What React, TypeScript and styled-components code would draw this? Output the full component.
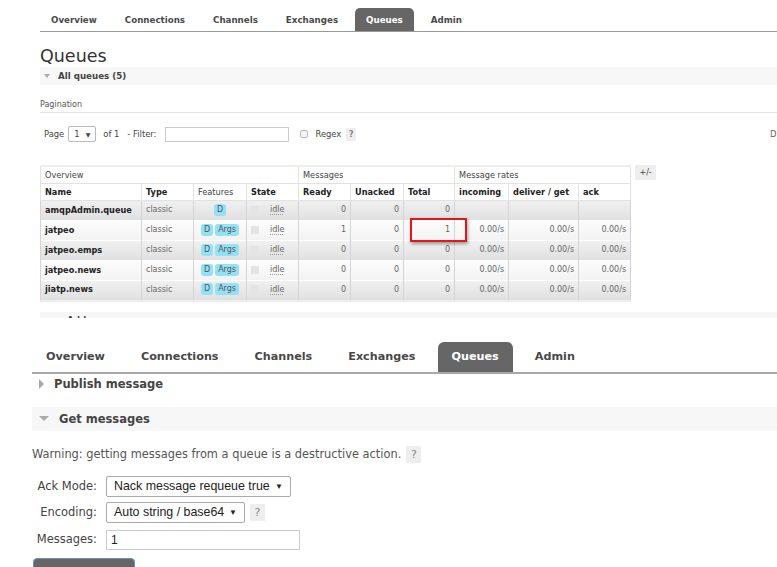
import React from 'react';
import styled, { createGlobalStyle } from 'styled-components';

const GlobalStyle = createGlobalStyle`
  html, body {
    margin: 0;
    padding: 0;
    background: #fff;
  }
`;

const Page = styled.div`
  position: relative;
  width: 777px;
  height: 567px;
  overflow: hidden;
  background: #fff;
  font-family: 'DejaVu Sans', Verdana, sans-serif;
  color: #444;
`;

/* ---------- shared ---------- */

const TabBar = styled.div<{ $large?: boolean }>`
  display: flex;
  align-items: flex-end;
  gap: ${(p) => (p.$large ? '8px' : '6px')};
  padding-top: ${(p) => (p.$large ? '24px' : '8px')};
  border-bottom: ${(p) => (p.$large ? '2px solid #a8a8a8' : '1px solid #999')};
`;

const Tab = styled.div<{ $large?: boolean; $active?: boolean }>`
  height: ${(p) => (p.$large ? '30px' : '23px')};
  line-height: ${(p) => (p.$large ? '30px' : '24px')};
  padding: 0 ${(p) => (p.$large ? '14px' : '11px')};
  font-size: ${(p) => (p.$large ? '11.2px' : '8.7px')};
  font-weight: bold;
  color: ${(p) => (p.$active ? '#fff' : '#484848')};
  background: ${(p) => (p.$active ? '#666' : 'transparent')};
  border-radius: ${(p) => (p.$large ? '6px 6px 0 0' : '5px 5px 0 0')};
  white-space: nowrap;
`;

const Help = styled.span<{ $large?: boolean }>`
  display: inline-block;
  width: ${(p) => (p.$large ? '15px' : '10px')};
  height: ${(p) => (p.$large ? '17px' : '13px')};
  line-height: ${(p) => (p.$large ? '17px' : '13px')};
  text-align: center;
  background: #eee;
  color: #888;
  font-size: ${(p) => (p.$large ? '11px' : '8.5px')};
  font-weight: ${(p) => (p.$large ? 'normal' : 'bold')};
`;

const Triangle = styled.span<{ $open?: boolean; $large?: boolean }>`
  display: inline-block;
  width: 0;
  height: 0;
  ${(p) =>
    p.$open
      ? `border-left: ${p.$large ? 5 : 3.5}px solid transparent;
         border-right: ${p.$large ? 5 : 3.5}px solid transparent;
         border-top: ${p.$large ? 5 : 4}px solid #aaa;`
      : `border-top: 5px solid transparent;
         border-bottom: 5px solid transparent;
         border-left: 5px solid #aaa;`}
`;

/* ---------- top screenshot ---------- */

const TopShot = styled.section`
  padding-left: 40px;
`;

const Title = styled.h1`
  margin: 0;
  padding-top: 13px;
  height: 22px;
  line-height: 22px;
  font-size: 17.5px;
  font-weight: normal;
  color: #333;
`;

const SectionBar = styled.div<{ $large?: boolean; $plain?: boolean }>`
  display: flex;
  align-items: center;
  gap: ${(p) => (p.$large ? '10px' : '8px')};
  height: ${(p) => (p.$large ? (p.$plain ? '21px' : '24px') : '18px')};
  padding-left: ${(p) => (p.$large ? '7px' : '4px')};
  background: ${(p) => (p.$plain ? 'transparent' : '#f7f7f7')};
  font-size: ${(p) => (p.$large ? '11.5px' : '8.7px')};
  font-weight: bold;
  color: #444;
`;

const SubHeading = styled.div`
  margin-top: 15px;
  padding-bottom: 3px;
  border-bottom: 1px solid #e6e6e6;
  font-size: 8px;
  color: #555;
`;

const FilterRow = styled.div`
  display: flex;
  align-items: center;
  height: 16px;
  margin-top: 13px;
  margin-right: -200px;
  padding-left: 4px;
  font-size: 8.4px;
  color: #444;
  white-space: nowrap;
`;

const SmallSelect = styled.div`
  display: flex;
  align-items: center;
  justify-content: space-between;
  box-sizing: border-box;
  width: 28px;
  height: 16px;
  margin: 0 7px 0 4px;
  padding: 0 5px;
  border: 1px solid #bbb;
  border-radius: 2px;
  font-size: 8.4px;
  & span { font-size: 6px; }
`;

const SmallInput = styled.div`
  box-sizing: border-box;
  width: 124px;
  height: 15px;
  margin: 0 11px 0 9px;
  border: 1px solid #ccc;
`;

const Checkbox = styled.span<{ $flat?: boolean }>`
  display: inline-block;
  flex: none;
  box-sizing: border-box;
  width: 8px;
  height: 8px;
  border: ${(p) => (p.$flat ? 'none' : '1px solid #bbb')};
  background: ${(p) => (p.$flat ? '#e4e4e4' : '#f4f4f4')};
  border-radius: ${(p) => (p.$flat ? '0' : '2px')};
`;

const RegexLabel = styled.span`
  margin: 0 5px 0 7px;
`;

const RightNote = styled.span`
  margin-left: auto;
  width: 207px;
  color: #666;
`;

const TableRow = styled.div`
  display: flex;
  align-items: flex-start;
  gap: 4px;
  margin-top: 23px;
`;

const TableWrap = styled.div`
  position: relative;
`;

const Table = styled.table`
  border-collapse: collapse;
  table-layout: fixed;
  width: 590px;
  font-size: 8.2px;
  border-top: 2px solid #eee;
  border-bottom: 2px solid #eee;
`;

const HeadCell = styled.th<{ $strong?: boolean }>`
  height: 16px;
  padding: 0 4px;
  text-align: left;
  font-weight: ${(p) => (p.$strong ? 'bold' : 'normal')};
  color: ${(p) => (p.$strong ? '#222' : '#444')};
  background: #fff;
  border: 1px solid #e2e2e2;
  white-space: nowrap;
  overflow: hidden;
`;

const DataRow = styled.tr<{ $alt?: boolean }>`
  height: 20px;
  background: ${(p) =>
    p.$alt
      ? 'linear-gradient(#fcfcfc, #f2f2f2)'
      : 'linear-gradient(#f0f0f0, #dfdfdf)'};
`;

const Cell = styled.td<{ $align?: 'left' | 'right' | 'center'; $strong?: boolean }>`
  padding: 0 4px 2px;
  text-align: ${(p) => p.$align || 'left'};
  font-weight: ${(p) => (p.$strong ? 'bold' : 'normal')};
  color: ${(p) => (p.$strong ? '#222' : '#666')};
  font-size: ${(p) => (p.$strong ? '8.2px' : '8px')};
  border-left: 1px solid #d4d4d4;
  border-right: 1px solid #d4d4d4;
  border-top: 1px solid #fff;
  white-space: nowrap;
  overflow: hidden;
`;

const Badge = styled.span`
  display: inline-block;
  padding: 0 3px;
  height: 12px;
  line-height: 12px;
  margin: 0 1px;
  border-radius: 3px;
  background: #93e1f7;
  color: #555;
  font-size: 8px;
`;

const StateCell = styled.div`
  display: flex;
  align-items: center;
  gap: 11px;
  & u {
    text-decoration: underline dotted #999;
    text-underline-offset: 2px;
  }
`;

const PlusMinus = styled.div`
  width: 21px;
  height: 15px;
  line-height: 15px;
  text-align: center;
  background: #eee;
  color: #444;
  font-size: 8px;
`;

const Highlight = styled.div`
  position: absolute;
  left: 370px;
  top: 53px;
  width: 57px;
  height: 24px;
  box-sizing: border-box;
  border: 2px solid #e8141b;
  box-shadow: 1px 2px 3px rgba(0, 0, 0, 0.35);
`;

const CutBar = styled.div`
  height: 6px;
  margin-top: 10px;
  background: #f7f7f7;
  overflow: hidden;
  font-size: 8.7px;
  font-weight: bold;
  line-height: 17px;
  padding-left: 27px;
  color: #444;
  white-space: nowrap;
`;

/* ---------- bottom screenshot ---------- */

const BottomShot = styled.section`
  padding-left: 32px;
`;

const Spacer = styled.div<{ $h: number }>`
  height: ${(p) => p.$h}px;
`;

const Warning = styled.div`
  display: flex;
  align-items: center;
  gap: 5px;
  margin-top: 15px;
  font-size: 11.4px;
  color: #555;
`;

const Form = styled.div`
  display: grid;
  grid-template-columns: 65px auto;
  column-gap: 9px;
  row-gap: 5px;
  margin-top: 13px;
  align-items: center;
`;

const Label = styled.div`
  text-align: right;
  font-size: 11.5px;
  color: #444;
`;

const FieldLine = styled.div`
  display: flex;
  align-items: center;
  gap: 5px;
`;

const Select = styled.div<{ $w: number }>`
  display: flex;
  align-items: center;
  justify-content: space-between;
  box-sizing: border-box;
  width: ${(p) => p.$w}px;
  height: 21px;
  padding: 0 7px 0 7px;
  border: 1px solid #aaa;
  border-radius: 2px;
  font-family: 'Liberation Sans', Arial, sans-serif;
  font-size: 12.4px;
  color: #222;
  white-space: nowrap;
  & span { font-size: 8px; }
`;

const TextField = styled.div`
  box-sizing: border-box;
  width: 194px;
  height: 20px;
  margin-top: 2px;
  padding-left: 4px;
  line-height: 18px;
  border: 1px solid #ccc;
  font-family: 'Liberation Sans', Arial, sans-serif;
  font-size: 12px;
  color: #222;
`;

const GetButton = styled.div`
  width: 100px;
  height: 20px;
  margin: 8px 0 0 1px;
  background: #666;
  border: 1px solid #6c8fc4;
  border-radius: 4px;
`;

type Queue = {
  name: string;
  args: boolean;
  ready: number;
  unacked: number;
  total: number;
  rates: boolean;
};

const queues: Queue[] = [
  { name: 'amqpAdmin.queue', args: false, ready: 0, unacked: 0, total: 0, rates: false },
  { name: 'jatpeo', args: true, ready: 1, unacked: 0, total: 1, rates: true },
  { name: 'jatpeo.emps', args: true, ready: 0, unacked: 0, total: 0, rates: true },
  { name: 'jatpeo.news', args: true, ready: 0, unacked: 0, total: 0, rates: true },
  { name: 'jiatp.news', args: true, ready: 0, unacked: 0, total: 0, rates: true },
];

const tabs = ['Overview', 'Connections', 'Channels', 'Exchanges', 'Queues', 'Admin'];

const Tabs = ({ large }: { large?: boolean }) => (
  <TabBar $large={large}>
    {tabs.map((t) => (
      <Tab key={t} $large={large} $active={t === 'Queues'}>
        {t}
      </Tab>
    ))}
  </TabBar>
);

export default function App() {
  return (
    <Page>
      <GlobalStyle />
      <TopShot>
        <Tabs />
        <Title>Queues</Title>
        <SectionBar>
          <Triangle $open />
          All queues (5)
        </SectionBar>
        <SubHeading>Pagination</SubHeading>
        <FilterRow>
          Page
          <SmallSelect>
            1 <span>▼</span>
          </SmallSelect>
          of 1&nbsp;&nbsp;&nbsp;- Filter:
          <SmallInput />
          <Checkbox />
          <RegexLabel>Regex</RegexLabel>
          <Help>?</Help>
          <RightNote>Displaying 5 items , page size up to:</RightNote>
        </FilterRow>
        <TableRow>
          <TableWrap>
            <Table>
              <colgroup>
                {[101, 52, 53, 52, 52, 53, 51, 54, 70, 52].map((w, i) => (
                  <col key={i} style={{ width: w }} />
                ))}
              </colgroup>
              <thead>
                <tr>
                  <HeadCell colSpan={4}>Overview</HeadCell>
                  <HeadCell colSpan={3}>Messages</HeadCell>
                  <HeadCell colSpan={3}>Message rates</HeadCell>
                </tr>
                <tr>
                  <HeadCell $strong>Name</HeadCell>
                  <HeadCell $strong>Type</HeadCell>
                  <HeadCell>Features</HeadCell>
                  <HeadCell $strong>State</HeadCell>
                  <HeadCell $strong>Ready</HeadCell>
                  <HeadCell $strong>Unacked</HeadCell>
                  <HeadCell $strong>Total</HeadCell>
                  <HeadCell $strong>incoming</HeadCell>
                  <HeadCell $strong>deliver / get</HeadCell>
                  <HeadCell $strong>ack</HeadCell>
                </tr>
              </thead>
              <tbody>
                {queues.map((q, i) => (
                  <DataRow key={q.name} $alt={i % 2 === 1}>
                    <Cell $strong>{q.name}</Cell>
                    <Cell>classic</Cell>
                    <Cell $align="center">
                      <Badge>D</Badge>
                      {q.args && <Badge>Args</Badge>}
                    </Cell>
                    <Cell>
                      <StateCell>
                        <Checkbox $flat />
                        <u>idle</u>
                      </StateCell>
                    </Cell>
                    <Cell $align="right">{q.ready}</Cell>
                    <Cell $align="right">{q.unacked}</Cell>
                    <Cell $align="right">{q.total}</Cell>
                    <Cell $align="right">{q.rates ? '0.00/s' : ''}</Cell>
                    <Cell $align="right">{q.rates ? '0.00/s' : ''}</Cell>
                    <Cell $align="right">{q.rates ? '0.00/s' : ''}</Cell>
                  </DataRow>
                ))}
              </tbody>
            </Table>
            <Highlight />
          </TableWrap>
          <PlusMinus>+/-</PlusMinus>
        </TableRow>
        <CutBar>Add a new queue</CutBar>
      </TopShot>

      <BottomShot>
        <Tabs large />
        <SectionBar $large $plain>
          <Triangle $large />
          Publish message
        </SectionBar>
        <Spacer $h={12} />
        <SectionBar $large>
          <Triangle $open $large />
          Get messages
        </SectionBar>
        <Warning>
          Warning: getting messages from a queue is a destructive action.
          <Help $large>?</Help>
        </Warning>
        <Form>
          <Label>Ack Mode:</Label>
          <Select $w={185}>
            Nack message requeue true <span>▼</span>
          </Select>
          <Label>Encoding:</Label>
          <FieldLine>
            <Select $w={139}>
              Auto string / base64 <span>▼</span>
            </Select>
            <Help $large>?</Help>
          </FieldLine>
          <Label>Messages:</Label>
          <TextField>1</TextField>
        </Form>
        <GetButton />
      </BottomShot>
    </Page>
  );
}
